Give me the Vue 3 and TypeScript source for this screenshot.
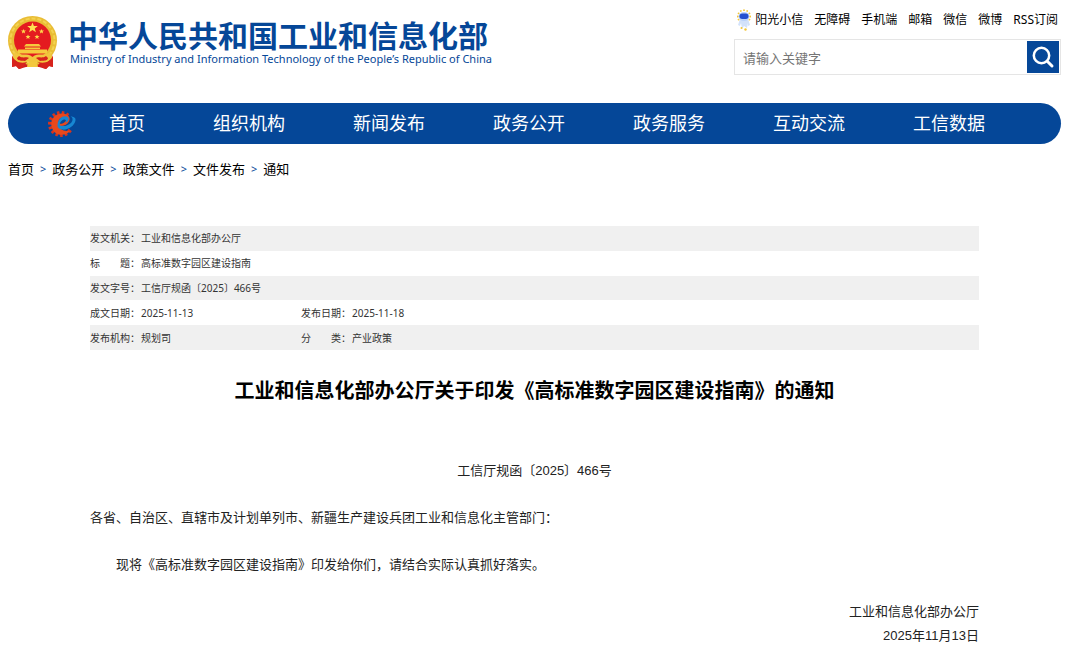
<script setup lang="ts">
import { ref } from 'vue'

interface MetaField { label: string; value: string }

const quickLinks: string[] = ['阳光小信', '无障碍', '手机端', '邮箱', '微信', '微博', 'RSS订阅']
const navItems: string[] = ['首页', '组织机构', '新闻发布', '政务公开', '政务服务', '互动交流', '工信数据']
const crumbs: string[] = ['首页', '政务公开', '政策文件', '文件发布', '通知']
const metaRows: MetaField[][] = [
  [{ label: '发文机关：', value: '工业和信息化部办公厅' }],
  [{ label: '标　　题：', value: '高标准数字园区建设指南' }],
  [{ label: '发文字号：', value: '工信厅规函〔2025〕466号' }],
  [{ label: '成文日期：', value: '2025-11-13' }, { label: '发布日期：', value: '2025-11-18' }],
  [{ label: '发布机构：', value: '规划司' }, { label: '分　　类：', value: '产业政策' }],
]
const keyword = ref('')
const teeth: number[] = Array.from({ length: 12 }, (_, i) => 130 + i * 24)
const rays: number[] = Array.from({ length: 9 }, (_, i) => -120 + i * 30)
</script>

<template>
  <div class="page">
    <header class="header">
      <a class="brand" href="#">
        <svg class="emblem" viewBox="0 0 50 54" aria-hidden="true">
          <path d="M6 36 4 51l4-1 3 3 7-2h13l7 2 3-3 4 1-2-15z" fill="#cf1f1c" />
          <circle cx="24.500" cy="24.500" r="24.500" fill="#e9bd35" />
          <circle cx="24.500" cy="24.500" r="22" fill="none" stroke="#f4d250" stroke-width="2" stroke-dasharray="4 2" />
          <circle cx="24.500" cy="24" r="18.500" fill="#e41b20" />
          <path d="m24.500 6.500 1.400 3.500h3.900l-3 2.500 1.100 3.800-3.400-2.200-3.400 2.200 1.100-3.800-3-2.500h3.900z" fill="#ffe052" />
          <g fill="#ffd84c">
            <path d="m15.500 13 .7 1.600h1.800l-1.400 1.200.5 1.800-1.600-1-1.600 1 .5-1.800-1.400-1.200h1.800z" />
            <path d="m33.500 13 .7 1.600h1.800l-1.400 1.200.5 1.800-1.600-1-1.600 1 .5-1.800-1.400-1.200h1.800z" />
            <path d="m20 18.500.7 1.600h1.800l-1.400 1.200.5 1.800-1.600-1-1.600 1 .5-1.800-1.400-1.200h1.800z" />
            <path d="m29 18.500.7 1.600h1.800l-1.400 1.200.5 1.800-1.600-1-1.600 1 .5-1.800-1.400-1.200h1.800z" />
          </g>
          <path d="M18 28h13l2 2.500H16zM17 31.500h15v1.500H17zM10 33.500h29v4H10z" fill="#f5cb3d" />
          <path d="M7 36c6 5 12 0 17.500 5C30 36 36 41 42 36l3 6-8 6-8-3-4.500 5-4.500-5-8 3-8-6z" fill="#f2c63e" />
          <path d="M11 40c4 3 8 0 10 2l-4 3c-3-1-7 1-8-3zM38 40c-4 3-8 0-10 2l4 3c3-1 7 1 8-3z" fill="#d7231c" />
          <path d="M4 39c2 7 9 9 15 7l-5 6-3 1-3-3-4 1zM45 39c-2 7-9 9-15 7l5 6 3 1 3-3 4 1z" fill="#d7231c" />
          <path d="M19 51a5.500 5.500 0 0 1 11 0z" fill="#f3c83f" />
        </svg>
        <span class="names">
          <span class="name-zh">中华人民共和国工业和信息化部</span>
          <span class="name-en">Ministry of Industry and Information Technology of the People’s Republic of China</span>
        </span>
      </a>
      <div class="tools">
        <nav class="quick" aria-label="快捷入口">
          <a v-for="(item, i) in quickLinks" :key="item" href="#">
            <svg v-if="i === 0" class="mascot" viewBox="0 0 14 22" aria-hidden="true">
              <path d="M3 10h8l2 6-2 1v-3l-1 5-3-2-2 3-1-6-1 3-2-1z" fill="#d3e2fa" />
              <ellipse cx="7" cy="7.500" rx="5.500" ry="4.500" fill="#bcd2fa" />
              <rect x="2.500" y="4.500" width="9" height="5.500" rx="2.700" fill="#2450d0" />
              <g fill="#f3c637">
                <circle v-for="r in rays" :key="r" cx="7" cy="1.200" r="0.900" :transform="`rotate(${r} 7 7.500)`" />
                <circle cx="4.500" cy="19" r="1" />
                <circle cx="8.500" cy="20.500" r="1.200" />
              </g>
            </svg>{{ item }}</a>
        </nav>
        <form class="search" role="search" @submit.prevent>
          <input v-model="keyword" type="text" placeholder="请输入关键字" aria-label="请输入关键字" />
          <button type="submit" aria-label="搜索">
            <svg viewBox="0 0 32 32" aria-hidden="true">
              <circle cx="14.500" cy="14.500" r="7.700" fill="none" stroke="#fff" stroke-width="2.500" />
              <path d="m20.500 20.500 4.500 4.500" stroke="#fff" stroke-width="3" stroke-linecap="round" />
            </svg>
          </button>
        </form>
      </div>
    </header>

    <nav class="main-nav" aria-label="主导航">
      <svg class="gear" viewBox="0 0 28 28" aria-hidden="true">
        <g fill="#d8341c">
          <rect v-for="t in teeth" :key="t" x="11.700" y="1" width="2.600" height="4" :transform="`rotate(${t} 13 14)`" />
        </g>
        <path d="M22 21C17 27 7 26 4 18 1 9 8 3 15 3.500c5 .5 8 4 6 8-2 3.500-6 5-10 4.500 2 5 7 5 11 5z" fill="#e9481b" />
        <path d="M10.500 13.500C10 9 13 7 16 7.500c3 .5 2.500 4-.5 5.500-2 1-4 1-5 .5z" fill="#054798" />
        <path d="M9.500 15c.5-6 5-9.500 9-8.500 3.500 1 2.500 5-1 6.500 2-3-1-4.500-3.500-2.500-2 1.500-2.500 3.500-2 5 6 2 12-2 12.500-5.500.3-2-.5-2.700-2-3.500 3 0 5.500 1 5 4-.8 5-7.500 10-13.500 9-3-.5-4.800-2-4.500-4.500z" fill="#1787d2" />
      </svg>
      <a v-for="item in navItems" :key="item" href="#">{{ item }}</a>
    </nav>

    <nav class="crumbs" aria-label="当前位置">
      <template v-for="(item, i) in crumbs" :key="item">
        <span v-if="i > 0" class="sep">&gt;</span>
        <a href="#">{{ item }}</a>
      </template>
    </nav>

    <main class="article">
      <table class="meta">
        <colgroup><col class="c-label" /><col class="c-value" /><col class="c-label" /><col /></colgroup>
        <tbody>
          <tr v-for="(row, i) in metaRows" :key="i">
            <template v-for="field in row" :key="field.label">
              <th scope="row">{{ field.label }}</th>
              <td :colspan="row.length === 1 ? 3 : 1">{{ field.value }}</td>
            </template>
          </tr>
        </tbody>
      </table>
      <h1>工业和信息化部办公厅关于印发《高标准数字园区建设指南》的通知</h1>
      <div class="content">
        <p class="number">工信厅规函〔2025〕466号</p>
        <p>各省、自治区、直辖市及计划单列市、新疆生产建设兵团工业和信息化主管部门：</p>
        <p class="indent">现将《高标准数字园区建设指南》印发给你们，请结合实际认真抓好落实。</p>
        <p class="sign">工业和信息化部办公厅<br />2025年11月13日</p>
      </div>
    </main>
  </div>
</template>

<style>
body { margin: 0; background: #fff; }
</style>

<style scoped>
.page { padding: 0 19px 0 8px; font-family: "Noto Sans", "Noto Sans CJK SC", sans-serif; color: #000; }
a { color: inherit; text-decoration: none; }
.header { display: flex; justify-content: space-between; height: 103px; }
.brand { display: flex; align-items: flex-start; gap: 10px; padding-top: 16px; color: #054798; }
.emblem { width: 50px; height: 54px; }
.names { display: flex; flex-direction: column; white-space: nowrap; }
.name-zh { font: bold 30px/36px "Noto Sans CJK SC", sans-serif; }
.name-en { padding-left: 2px; font: 11px/14px "Noto Sans", sans-serif; }
.tools { display: flex; flex-direction: column; width: 327px; padding-top: 9px; }
.quick { display: flex; justify-content: flex-end; gap: 11px; padding-right: 3px; font-size: 12px; line-height: 22px; white-space: nowrap; }
.quick a { display: flex; align-items: center; }
.mascot { width: 14px; height: 22px; margin-right: 4px; }
.search { display: flex; box-sizing: border-box; height: 36px; margin-top: 8px; padding: 1px; border: 1px solid #e5e5e5; }
.search input { flex: 1; min-width: 0; padding: 0 7px; border: 0; outline: 0; font: 13px "Noto Sans CJK SC", sans-serif; }
.search input::placeholder { color: #757575; opacity: 1; }
.search button { width: 32px; height: 32px; padding: 0; border: 0; background: #054798; }
.search svg { display: block; }
.main-nav { display: flex; align-items: center; height: 41px; padding-left: 40px; border-radius: 21px; background: #054798; color: #fff; font-size: 18px; line-height: 24px; white-space: nowrap; }
.main-nav a { padding: 0 34px 2px; }
.gear { width: 28px; height: 28px; margin-right: -1px; }
.crumbs { display: flex; gap: 6px; margin-top: 15px; font-size: 13px; line-height: 20px; }
.sep { color: #054798; font-size: 11px; }
.article { padding: 47px 82px 0; }
.meta { width: 100%; height: 124px; border-collapse: collapse; table-layout: fixed; color: #333; font-size: 10px; line-height: 16px; }
.c-label { width: 51px; }
.c-value { width: 160px; }
.meta th, .meta td { padding: 0; font-weight: normal; text-align: left; white-space: nowrap; }
.meta tr:nth-child(odd) { background: #f0f0f0; }
h1 { margin: 26px 0 0; font-size: 20px; line-height: 30px; text-align: center; }
.content { display: flex; flex-direction: column; gap: 23px; margin-top: 53px; font: 13px/24px "Liberation Sans", "Noto Sans CJK SC", sans-serif; color: #222; }
.content p { margin: 0; }
.number { text-align: center; }
.content .indent { text-indent: 2em; }
.sign { text-align: right; }
</style>
